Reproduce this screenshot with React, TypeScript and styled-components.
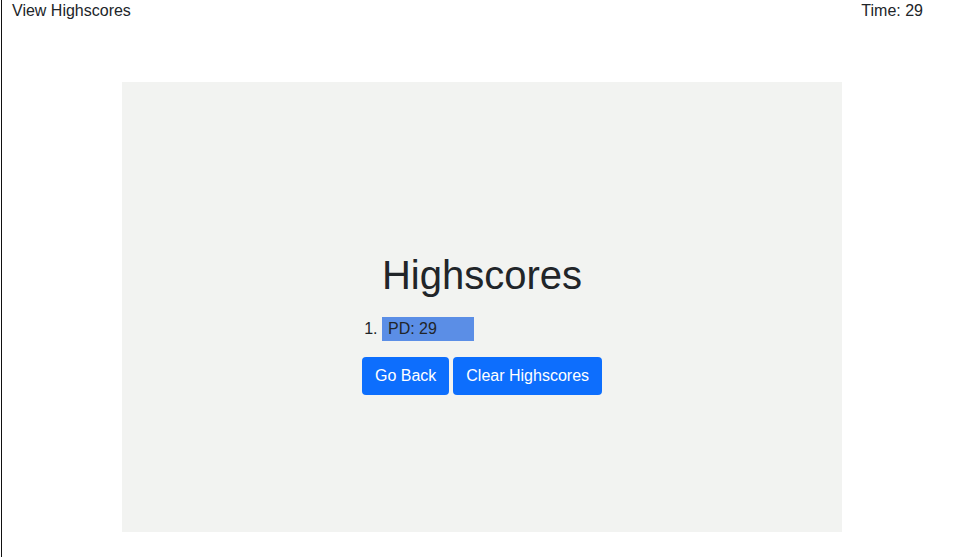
import React from "react";
import styled, { createGlobalStyle } from "styled-components";

const Global = createGlobalStyle`
  html, body { margin: 0; padding: 0; background: #fff; }
  body {
    font-family: "Liberation Sans", Arial, sans-serif;
    font-size: 16px;
    color: #212529;
  }
  * { box-sizing: border-box; }
`;

const Page = styled.div`
  width: 961px;
  height: 557px;
  border-left: 1px solid #111;
  margin-left: 1px;
  overflow: hidden;
`;

const TopBar = styled.header`
  display: flex;
  justify-content: space-between;
  padding: 1px 39px 0 10px;
  line-height: 20px;
  height: 82px;
`;

const Panel = styled.main`
  width: 720px;
  height: 450px;
  margin-left: 120px;
  background: #f2f3f1;
  padding-top: 169px;
  display: flex;
  flex-direction: column;
  align-items: center;
`;

const Title = styled.h1`
  margin: 0 0 18px;
  font-size: 40px;
  font-weight: 500;
  line-height: 48px;
  color: #212529;
`;

const Block = styled.div`
  text-align: left;
`;

const List = styled.ol`
  margin: 0 0 16px;
  padding-left: 20px;
`;

const Item = styled.li<{ $highlight?: boolean }>`
  width: 92px;
  height: 24px;
  line-height: 24px;
  padding-left: 6px;
  background: ${(p) => (p.$highlight ? "#5b8ee6" : "transparent")};
`;

const Buttons = styled.div`
  display: flex;
  gap: 4px;
`;

const Button = styled.button`
  font-family: inherit;
  font-size: 16px;
  line-height: 24px;
  padding: 7px 13px;
  color: #fff;
  background: #0d6efd;
  border: 0;
  border-radius: 4px;
  cursor: pointer;
`;

export default function App() {
  return (
    <>
      <Global />
      <Page>
        <TopBar>
          <span>View Highscores</span>
          <span>Time: 29</span>
        </TopBar>
        <Panel>
          <Title>Highscores</Title>
          <Block>
            <List>
              <Item $highlight>PD: 29</Item>
            </List>
            <Buttons>
              <Button>Go Back</Button>
              <Button>Clear Highscores</Button>
            </Buttons>
          </Block>
        </Panel>
      </Page>
    </>
  );
}
